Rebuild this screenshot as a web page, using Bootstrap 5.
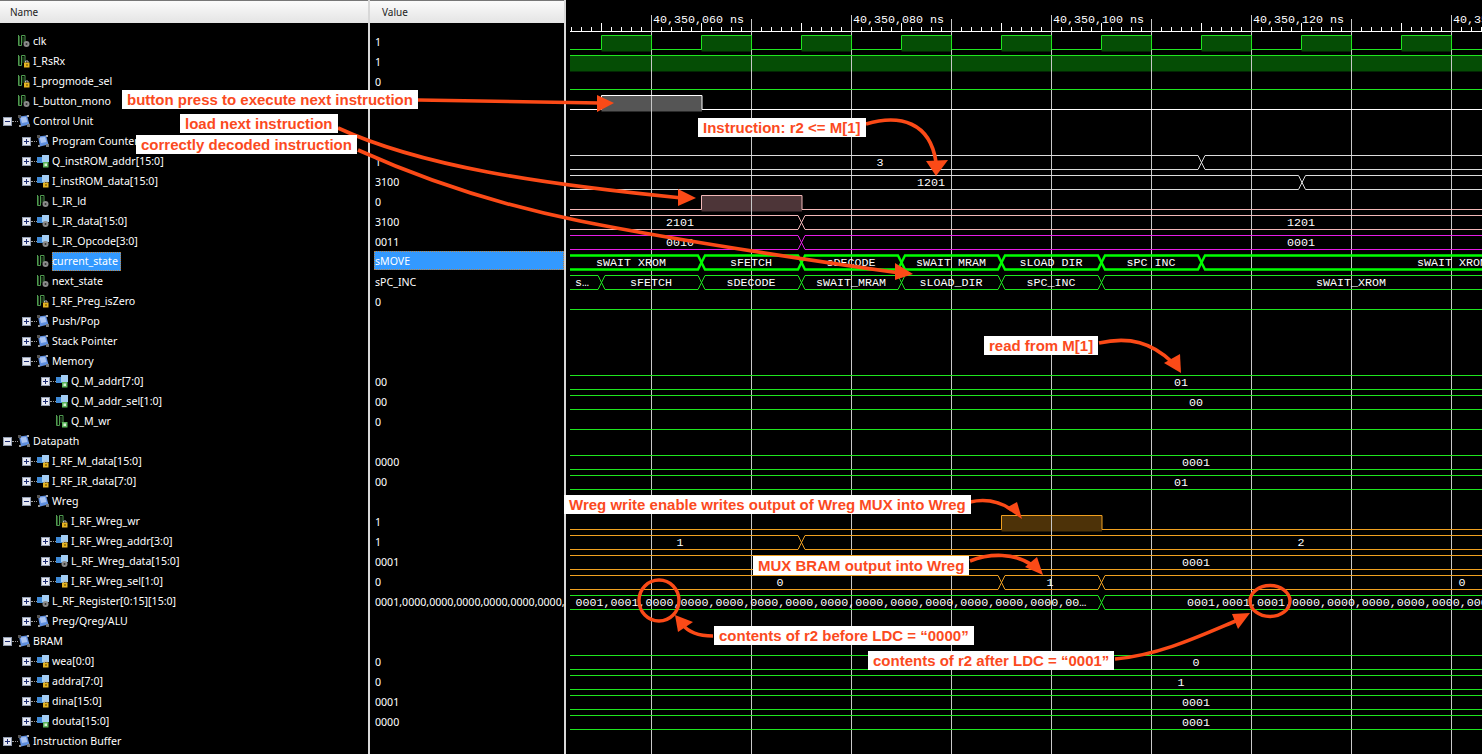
<!DOCTYPE html>
<html lang="en">
<head>
  <meta charset="UTF-8" />
  <title>Waveform viewer</title>
  <link href="https://cdn.jsdelivr.net/npm/bootstrap@5.3.3/dist/css/bootstrap.min.css" rel="stylesheet">
  <style>
    body { background-color: #000; }
    .viewer { width: 1482px; height: 754px; }
    .names-col { width: 370px; border-right: 2px solid #d8d8d8; }
    .values-col { width: 196px; border-right: 2px solid #d8d8d8; }
    .wave-col { width: 916px; }
    .col-head {
      height: 23px;
      padding-top: 1px;
      background: linear-gradient(#fbfbfb, #e4e4e4);
      border-top: 1px solid #777;
      color: #222;
      font: 10px/20px "Noto Sans", sans-serif;
    }
    .names-col .col-head { padding-left: 10px; }
    .values-col .col-head { padding-left: 12px; }
    .rows-wrap { padding-top: 8px; }
    .sig-row {
      height: 20px;
      color: #fff;
      font: 10.6px/20px "Noto Sans", sans-serif;
      white-space: nowrap;
    }
    .depth-0 { padding-left: 3px; }
    .depth-1 { padding-left: 22px; }
    .depth-2 { padding-left: 41px; }
    .val-row { padding-left: 5px; line-height: 22px; overflow: hidden; }
    .tree-box {
      width: 9px;
      height: 9px;
      flex: none;
      display: block;
    }
    .tree-dots { width: 6px; flex: none; border-top: 1px dotted #999; }
    .tree-gap { width: 15px; flex: none; }
    .sig-ico { width: 12px; height: 14px; flex: none; margin-right: 3px; }
    .sel-name {
      background-color: #3399ff;
      outline: 1px dotted #b9803f;
      outline-offset: -1px;
      line-height: 19px;
      padding-right: 3px;
    }
    .sel-val {
      background-color: #3399ff;
      margin-left: -1px;
      padding-left: 1px;
      height: 19px;
      line-height: 21px;
      outline: 1px dotted #b9803f;
      outline-offset: -1px;
    }
    .wave-svg { display: block; }
    .wave-txt { font: 11.67px "Liberation Mono", monospace; fill: #fff; }
    .overlay { top: 0; left: 0; pointer-events: none; }
    .anno {
      height: 19px;
      padding: 0 5px;
      white-space: nowrap;
      color: #fb4a1e;
      font: bold 15px/19px "Liberation Sans", sans-serif;
    }
    .anno-button { left: 122px; top: 90px; }
    .anno-load { left: 180px; top: 114px; }
    .anno-decoded { left: 136px; top: 135px; }
    .anno-instr { left: 698px; top: 118px; }
    .anno-read { left: 984px; top: 336px; }
    .anno-wreg { left: 564px; top: 495px; }
    .anno-mux { left: 753px; top: 556px; }
    .anno-before { left: 714px; top: 626px; }
    .anno-after { left: 868px; top: 651px; }
  </style>
</head>
<body>
  <svg width="0" height="0" class="position-absolute">
    <defs>
      <clipPath id="clip-state"><rect x="566" y="251" width="916" height="15"/></clipPath>
      <symbol id="box-plus" viewBox="0 0 9 9">
        <rect x=".5" y=".5" width="8" height="8" fill="#e6e8f0" stroke="#8f9bb0"/>
        <path d="M2 4.5h5M4.5 2v5" stroke="#1b2a70"/>
      </symbol>
      <symbol id="box-minus" viewBox="0 0 9 9">
        <rect x=".5" y=".5" width="8" height="8" fill="#e6e8f0" stroke="#8f9bb0"/>
        <path d="M2 4.5h5" stroke="#1b2a70"/>
      </symbol>
      <symbol id="ico-group" viewBox="0 0 12 14">
        <path d="M1 2.5 9 1.5l2.5 9-8.5 2z" fill="#5f8fe0"/>
        <path d="M2.5 3.5 8 3l1.5 5-5.5 1z" fill="#a9c3f2"/>
        <rect x="0" y="1" width="3" height="3" fill="#555"/>
        <rect x="9" y="10" width="3" height="3" fill="#777"/>
        <rect x="9" y="1" width="2" height="2" fill="#aaa"/>
        <rect x="1" y="11" width="2" height="2" fill="#999"/>
      </symbol>
      <symbol id="ico-bus" viewBox="0 0 12 14">
        <rect x="0" y="3" width="8" height="6" fill="#3f8ad6"/>
        <rect x="5" y="1" width="7" height="7" fill="#a3cdf3"/>
      </symbol>
      <symbol id="ico-bit" viewBox="0 0 12 14">
        <path d="M.5 1V11.5H3.5V1.5H7V8" fill="none" stroke="#4f9a4f"/>
        <path d="M1.5 11V2M5 3V9" fill="none" stroke="#2c5a2c"/>
      </symbol>
      <symbol id="bdg-gear" viewBox="0 0 12 14">
        <circle cx="8.5" cy="10" r="3" fill="#8a8a8a"/>
        <circle cx="8.5" cy="10" r="1" fill="#333"/>
      </symbol>
      <symbol id="bdg-lock" viewBox="0 0 12 14">
        <rect x="6" y="8.5" width="5.5" height="5" fill="#e6b422"/>
        <path d="M7.5 8.5V7h2.5v1.5" fill="none" stroke="#bbb"/>
        <rect x="8.5" y="10" width="1" height="2" fill="#5a4300"/>
      </symbol>
      <symbol id="bdg-out" viewBox="0 0 12 14">
        <rect x="6" y="8" width="5.5" height="5.5" fill="#5ab45a"/>
        <rect x="7.5" y="9.5" width="2.5" height="2.5" fill="#d6f0d6"/>
      </symbol>
    </defs>
  </svg>

  <div class="viewer position-relative overflow-hidden d-flex bg-black">
    <div class="names-col flex-shrink-0">
      <div class="col-head">Name</div>
      <div class="rows-wrap" id="nameRows"></div>
    </div>
    <div class="values-col flex-shrink-0">
      <div class="col-head">Value</div>
      <div class="rows-wrap" id="valueRows"></div>
    </div>
    <div class="wave-col flex-shrink-0">
      <svg id="wave" class="wave-svg" width="916" height="754" viewBox="566 0 916 754"></svg>
    </div>

    <svg class="overlay position-absolute" width="1482" height="754" viewBox="0 0 1482 754">
      <g fill="none" stroke="#fb4a17" stroke-width="3.6">
        <path d="M418 100 L600 103"/>
        <path d="M338 128 C 420 166, 540 184, 682 198"/>
        <path d="M358 150 C 420 178, 490 203, 580 221 S 780 256, 900 273"/>
        <path d="M866 124 C 900 114, 930 122, 936 162"/>
        <path d="M1099 343 C 1130 336, 1152 343, 1172 362"/>
        <path d="M970 502 C 988 498, 1002 503, 1012 510"/>
        <path d="M970 561 C 990 553, 1015 553, 1032 565"/>
        <path d="M713 636 C 697 636, 688 632, 682 624"/>
        <path d="M1115 659 C 1160 655, 1200 636, 1238 620"/>
        <ellipse cx="659" cy="600.5" rx="20" ry="20.5" stroke-width="3.4"/>
        <ellipse cx="1270" cy="601" rx="20" ry="15.5" stroke-width="3.4"/>
      </g>
      <g fill="#fb4a17">
        <path d="M614 103 597 95v17z"/>
        <path d="M696 198 678 189v17z"/>
        <path d="M913 274 895 263v17z"/>
        <path d="M936 176 926 161l22-1z"/>
        <path d="M1181 373 1164 363l16-9z"/>
        <path d="M1022 519 1006 508l11-6z"/>
        <path d="M1043 575 1025 567l12-10z"/>
        <path d="M675 615 678 632l15-10z"/>
        <path d="M1250 613 1232 614l6 15z"/>
      </g>
    </svg>

    <div class="anno anno-button position-absolute bg-white">button press to execute next instruction</div>
    <div class="anno anno-load position-absolute bg-white">load next instruction</div>
    <div class="anno anno-decoded position-absolute bg-white">correctly decoded instruction</div>
    <div class="anno anno-instr position-absolute bg-white">Instruction: r2 &lt;= M[1]</div>
    <div class="anno anno-read position-absolute bg-white">read from M[1]</div>
    <div class="anno anno-wreg position-absolute bg-white">Wreg write enable writes output of Wreg MUX into Wreg</div>
    <div class="anno anno-mux position-absolute bg-white">MUX BRAM output into Wreg</div>
    <div class="anno anno-before position-absolute bg-white">contents of r2 before LDC = “0000”</div>
    <div class="anno anno-after position-absolute bg-white">contents of r2 after LDC = “0001”</div>
  </div>

  <script src="https://cdn.jsdelivr.net/npm/bootstrap@5.3.3/dist/js/bootstrap.bundle.min.js"></script>
  <script>
    // depth, tree state (+, -, or none), icon, badge, name, value
    const signals = [
      [0, "", "bit", "gear", "clk", "1"],
      [0, "", "bit", "lock", "I_RsRx", "1"],
      [0, "", "bit", "lock", "I_progmode_sel", "0"],
      [0, "", "bit", "gear", "L_button_mono", "0"],
      [0, "-", "group", "", "Control Unit", ""],
      [1, "+", "group", "", "Program Counter", ""],
      [1, "+", "bus", "out", "Q_instROM_addr[15:0]", "1"],
      [1, "+", "bus", "lock", "I_instROM_data[15:0]", "3100"],
      [1, "", "bit", "gear", "L_IR_ld", "0"],
      [1, "+", "bus", "gear", "L_IR_data[15:0]", "3100"],
      [1, "+", "bus", "gear", "L_IR_Opcode[3:0]", "0011"],
      [1, "", "bit", "gear", "current_state", "sMOVE"],
      [1, "", "bit", "gear", "next_state", "sPC_INC"],
      [1, "", "bit", "lock", "I_RF_Preg_isZero", "0"],
      [1, "+", "group", "", "Push/Pop", ""],
      [1, "+", "group", "", "Stack Pointer", ""],
      [1, "-", "group", "", "Memory", ""],
      [2, "+", "bus", "out", "Q_M_addr[7:0]", "00"],
      [2, "+", "bus", "out", "Q_M_addr_sel[1:0]", "00"],
      [2, "", "bit", "out", "Q_M_wr", "0"],
      [0, "-", "group", "", "Datapath", ""],
      [1, "+", "bus", "lock", "I_RF_M_data[15:0]", "0000"],
      [1, "+", "bus", "lock", "I_RF_IR_data[7:0]", "00"],
      [1, "-", "group", "", "Wreg", ""],
      [2, "", "bit", "lock", "I_RF_Wreg_wr", "1"],
      [2, "+", "bus", "lock", "I_RF_Wreg_addr[3:0]", "1"],
      [2, "+", "bus", "gear", "L_RF_Wreg_data[15:0]", "0001"],
      [2, "+", "bus", "lock", "I_RF_Wreg_sel[1:0]", "0"],
      [1, "+", "bus", "gear", "L_RF_Register[0:15][15:0]", "0001,0000,0000,0000,0000,0000,0000,0000,0000"],
      [1, "+", "group", "", "Preg/Qreg/ALU", ""],
      [0, "-", "group", "", "BRAM", ""],
      [1, "+", "bus", "lock", "wea[0:0]", "0"],
      [1, "+", "bus", "lock", "addra[7:0]", "0"],
      [1, "+", "bus", "lock", "dina[15:0]", "0001"],
      [1, "+", "bus", "out", "douta[15:0]", "0000"],
      [0, "+", "group", "", "Instruction Buffer", ""]
    ];
    const selectedRow = 11;

    const nameRows = document.getElementById("nameRows");
    const valueRows = document.getElementById("valueRows");
    signals.forEach(function (s, i) {
      const [depth, tree, icon, badge, name, value] = s;
      let lead = '<span class="tree-gap"></span>';
      if (tree) {
        lead = '<svg class="tree-box"><use href="#box-' + (tree === "+" ? "plus" : "minus") + '"/></svg><span class="tree-dots"></span>';
      }
      const badgeUse = badge ? '<use href="#bdg-' + badge + '"/>' : "";
      const label = i === selectedRow ? '<span class="sel-name">' + name + "</span>" : "<span>" + name + "</span>";
      nameRows.insertAdjacentHTML("beforeend",
        '<div class="sig-row d-flex align-items-center depth-' + depth + '">' + lead +
        '<svg class="sig-ico"><use href="#ico-' + icon + '"/>' + badgeUse + "</svg>" + label + "</div>");
      const valueCls = i === selectedRow ? "sel-val" : "";
      valueRows.insertAdjacentHTML("beforeend",
        '<div class="sig-row val-row"><div class="' + valueCls + '">' + value + "</div></div>");
    });

    // waveform
    const wave = document.getElementById("wave");
    const LEFT = 570, RIGHT = 1482;
    const GREEN = "#1fe61f", BRIGHT = "#00ff00", WHITE = "#ffffff", GRAY = "#dcdcdc",
          PINK = "#f2b8b8", MAGENTA = "#e61ee6", ORANGE = "#f0a020";
    let fills = "", grid = "", traces = "", texts = "";

    const rowTop = function (i) { return 31 + 20 * i; };
    const text = function (i, x, str, anchor, clip) {
      texts += '<text class="wave-txt" x="' + x + '" y="' + (rowTop(i) + 15) + '" text-anchor="' + (anchor || "middle") + '"' +
        (clip ? ' clip-path="url(#' + clip + ')"' : "") + ">" + str + "</text>";
    };

    function scalar(i, color, highs, fill) {
      const hi = rowTop(i) + 4.5, lo = rowTop(i) + 18.5;
      let d = "M" + LEFT + " " + (highs.length && highs[0][0] <= LEFT ? hi : lo);
      highs.forEach(function (h) {
        if (h[0] > LEFT) d += "H" + h[0] + "V" + hi;
        fills += '<rect x="' + h[0] + '" y="' + hi + '" width="' + (h[1] - h[0]) + '" height="16" fill="' + fill + '"/>';
        if (h[1] < RIGHT) d += "H" + h[1] + "V" + lo;
      });
      d += "H" + RIGHT;
      traces += '<path d="' + d + '" fill="none" stroke="' + color + '"/>';
    }

    function bus(i, color, changes, labels, thick) {
      const top = rowTop(i) + 4.5, bot = rowTop(i) + 18.5;
      const a = [[LEFT, top]], b = [[LEFT, bot]];
      let up = true;
      changes.forEach(function (x) {
        a.push([x - 3.5, up ? top : bot], [x + 3.5, up ? bot : top]);
        b.push([x - 3.5, up ? bot : top], [x + 3.5, up ? top : bot]);
        up = !up;
      });
      a.push([RIGHT, up ? top : bot]);
      b.push([RIGHT, up ? bot : top]);
      [a, b].forEach(function (pts) {
        traces += '<polyline points="' + pts.join(" ") + '" fill="none" stroke="' + color + '" stroke-width="' + (thick ? 2.4 : 1) + '"/>';
      });
      labels.forEach(function (l) { text(i, l[0], l[1], "middle", thick ? "clip-state" : ""); });
    }

    // clock and single bits
    const clkHighs = [];
    for (let x = 601.5; x < RIGHT; x += 100) clkHighs.push([x, x + 50]);
    scalar(0, GREEN, clkHighs, "#054d05");
    scalar(1, GREEN, [[LEFT, RIGHT]], "#054d05");
    scalar(2, GREEN, []);
    scalar(3, WHITE, [[601.5, 702]], "#555555");
    bus(6, GRAY, [1201.5], [[880, "3"]]);
    bus(7, GRAY, [1302], [[931, "1201"]]);
    scalar(8, PINK, [[701.5, 802]], "#4d3538");
    bus(9, PINK, [801.5], [[680, "2101"], [1301, "1201"]]);
    bus(10, MAGENTA, [801.5], [[680, "0010"], [1301, "0001"]]);
    bus(11, BRIGHT, [701.5, 801.5, 901.5, 1001.5, 1101.5, 1201.5],
      [[631, "sWAIT_XROM"], [751, "sFETCH"], [851, "sDECODE"], [951, "sWAIT_MRAM"], [1051, "sLOAD_DIR"], [1151, "sPC_INC"], [1452, "sWAIT_XROM"]], true);
    bus(12, GREEN, [601.5, 701.5, 801.5, 901.5, 1001.5, 1101.5],
      [[582, "s…"], [651, "sFETCH"], [751, "sDECODE"], [851, "sWAIT_MRAM"], [951, "sLOAD_DIR"], [1051, "sPC_INC"], [1351, "sWAIT_XROM"]]);
    scalar(13, GREEN, []);
    bus(17, GREEN, [], [[1181, "01"]]);
    bus(18, GREEN, [], [[1196, "00"]]);
    scalar(19, GREEN, []);
    bus(21, GREEN, [], [[1196, "0001"]]);
    bus(22, GREEN, [], [[1181, "01"]]);
    scalar(24, ORANGE, [[1001.5, 1102]], "#4d3208");
    bus(25, ORANGE, [801.5], [[680, "1"], [1301, "2"]]);
    bus(26, ORANGE, [], [[1196, "0001"]]);
    bus(27, ORANGE, [1001.5, 1101.5], [[780, "0"], [1050, "1"], [1462, "0"]]);
    bus(28, GREEN, [1101.5], []);
    text(28, 575.5, "0001,0001,0000,0000,0000,0000,0000,0000,0000,0000,0000,0000,0000,0000,00…", "start");
    text(28, 1187, "0001,0001,0001,0000,0000,0000,0000,0000,0000,0000", "start");
    bus(31, GREEN, [], [[1196, "0"]]);
    bus(32, GREEN, [], [[1181, "1"]]);
    bus(33, GREEN, [], [[1196, "0001"]]);
    bus(34, GREEN, [], [[1196, "0001"]]);

    // ruler and grid
    let ticks = "M" + LEFT + " 31.5H" + RIGHT;
    for (let x = 571.5; x < RIGHT; x += 10) ticks += "M" + x + " 27V31";
    for (let x = 601.5; x < RIGHT; x += 100) ticks += "M" + x + " 23V31";
    grid += '<path d="' + ticks + '" fill="none" stroke="#fff"/>';
    for (let k = 0; k < 9; k++) {
      const x = 651.5 + 100 * k;
      grid += '<line x1="' + x + '" x2="' + x + '" y1="' + (k % 2 ? 19 : 15) + '" y2="754" stroke="#c8c8c8"/>';
      if (k % 2 === 0) {
        const ns = 60 + 10 * k;
        texts += '<text class="wave-txt" x="' + (x + 1.5) + '" y="23">40,350,' + String(ns).padStart(3, "0") + " ns</text>";
      }
    }
    wave.innerHTML = fills + grid + traces + texts;
  </script>
</body>
</html>
